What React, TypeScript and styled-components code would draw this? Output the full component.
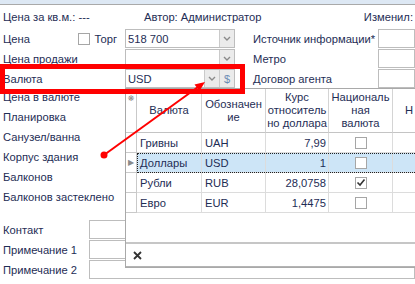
import React from 'react';
import styled, { createGlobalStyle } from 'styled-components';

const GlobalStyle = createGlobalStyle`
  html, body {
    margin: 0;
    padding: 0;
    background: #fff;
  }
  body {
    font-family: "Liberation Sans", Arial, sans-serif;
    font-size: 11.2px;
    color: #1e2d55;
  }
`;

const Window = styled.div`
  position: relative;
  width: 415px;
  height: 284px;
  overflow: hidden;
  background: #fff;
`;

const TopStrip = styled.div`
  height: 4px;
  background: #dde8f4;
  border-bottom: 1px solid #a9a9a9;
`;

const InfoRow = styled.div`
  display: flex;
  align-items: center;
  height: 24px;
  padding: 0 2px 0 3px;
`;

const InfoLeft = styled.span`
  width: 141px;
`;

const InfoRight = styled.span`
  margin-left: auto;
`;

const FieldRow = styled.div`
  display: grid;
  grid-template-columns: 125px 110px 18px 125px 1fr;
  height: 20px;
`;

const Label = styled.div<{ $flush?: boolean }>`
  display: flex;
  align-items: center;
  height: 19px;
  padding-left: ${(p) => (p.$flush ? '0' : '3px')};
  white-space: nowrap;
`;

const TorgGroup = styled.span`
  display: flex;
  align-items: center;
  gap: 5px;
  margin-left: auto;
  margin-right: 8px;
`;

const CheckBox = styled.span`
  display: inline-flex;
  align-items: center;
  justify-content: center;
  width: 12px;
  height: 12px;
  box-sizing: border-box;
  border: 1px solid #a6a6a6;
  background: #fff;
`;

const Input = styled.div`
  display: flex;
  align-items: center;
  height: 19px;
  box-sizing: border-box;
  border: 1px solid #bdbdbd;
  background: #fff;
  padding-left: 2px;
  white-space: nowrap;
  overflow: hidden;
`;

const InputText = styled.span`
  flex: 1;
`;

const DropButton = styled.span<{ $accent?: boolean }>`
  display: flex;
  align-items: center;
  justify-content: center;
  width: 15px;
  height: 100%;
  box-sizing: border-box;
  border-left: 1px solid #cacaca;
  background: #ebebeb;
  color: ${(p) => (p.$accent ? '#6a8ab4' : '#8a8a8a')};
  font-size: 11px;
`;

const Gap = styled.div``;

const LowerLabels = styled.div`
  display: flex;
  flex-direction: column;
  margin-top: -2px;
`;

const LowerLabel = styled.div`
  display: flex;
  align-items: center;
  height: 20px;
  padding-left: 3px;
`;

const BottomFields = styled.div`
  margin-top: 13px;
`;

const BottomRow = styled.div`
  display: grid;
  grid-template-columns: 89px 1fr;
  height: 20px;
`;

const BottomInput = styled.div`
  height: 19px;
  box-sizing: border-box;
  border: 1px solid #bdbdbd;
`;

/* dropdown grid popup */

const Popup = styled.div`
  position: absolute;
  left: 125px;
  top: 88px;
  width: 300px;
  height: 180px;
  box-sizing: border-box;
  display: flex;
  flex-direction: column;
  background: #fff;
  border: 1px solid #a9a9a9;
  border-right: none;
`;

const GridRow = styled.div`
  display: flex;
  flex: none;
`;

const RowBody = styled.div<{ $selected?: boolean }>`
  display: flex;
  flex: none;
  background: ${(p) => (p.$selected ? '#cde5f7' : '#fff')};
  outline: ${(p) => (p.$selected ? '1px dotted #222' : 'none')};
  outline-offset: -1px;
`;

const SelectorCell = styled.div<{ $header?: boolean }>`
  display: flex;
  flex: none;
  align-items: ${(p) => (p.$header ? 'flex-start' : 'center')};
  justify-content: center;
  width: 11px;
  height: ${(p) => (p.$header ? '44px' : '20px')};
  padding-top: ${(p) => (p.$header ? '5px' : '0')};
  box-sizing: border-box;
  border-right: 1px solid #c9c9c9;
  border-bottom: 1px solid #c9c9c9;
  color: #8a8a8a;
  font-family: "DejaVu Sans", sans-serif;
  font-size: 8px;
`;

const HeadCell = styled.div<{ $w: number; $left?: boolean }>`
  display: flex;
  flex: none;
  align-items: center;
  justify-content: ${(p) => (p.$left ? 'flex-start' : 'center')};
  width: ${(p) => p.$w}px;
  height: 44px;
  box-sizing: border-box;
  padding-left: ${(p) => (p.$left ? '12px' : '0')};
  border-right: 1px solid #d4d4d4;
  border-bottom: 1px solid #c4c4c4;
  text-align: center;
  line-height: 13px;
`;

const Cell = styled.div<{ $w: number; $align?: 'left' | 'right' | 'center' }>`
  display: flex;
  flex: none;
  align-items: center;
  justify-content: ${(p) =>
    p.$align === 'right' ? 'flex-end' : p.$align === 'center' ? 'center' : 'flex-start'};
  width: ${(p) => p.$w}px;
  height: 20px;
  box-sizing: border-box;
  padding: 0 2px 0 3px;
  border-right: 1px solid #dcdcdc;
  border-bottom: 1px solid #dcdcdc;
  white-space: nowrap;
`;

const EmptyArea = styled.div`
  flex: 1;
  border-bottom: 2px solid #c6c6c6;
`;

const PopupFooter = styled.div`
  display: flex;
  align-items: center;
  height: 23px;
  box-sizing: border-box;
  padding-left: 7px;
  border-bottom: 1px solid #b4b4b4;
`;

/* annotation */

const Highlight = styled.div`
  position: absolute;
  left: 0;
  top: 64px;
  width: 245px;
  height: 30px;
  box-sizing: border-box;
  border: 5px solid #ff0000;
  pointer-events: none;
`;

const ArrowLayer = styled.svg`
  position: absolute;
  left: 0;
  top: 0;
  pointer-events: none;
`;

const widths = [65, 64, 63, 64, 80];

const rows = [
  { name: 'Гривны', code: 'UAH', rate: '7,99', national: false },
  { name: 'Доллары', code: 'USD', rate: '1', national: false, selected: true },
  { name: 'Рубли', code: 'RUB', rate: '28,0758', national: true },
  { name: 'Евро', code: 'EUR', rate: '1,4475', national: false },
];

const Chevron = () => (
  <svg width="8" height="5" viewBox="0 0 8 5">
    <path d="M1 1 L4 4 L7 1" fill="none" stroke="#8a8a8a" strokeWidth="1.4" />
  </svg>
);

const Check = () => (
  <svg width="10" height="9" viewBox="0 0 10 9">
    <path d="M1.5 4.5 L4 7 L8.5 1.5" fill="none" stroke="#333" strokeWidth="1.6" />
  </svg>
);

const App: React.FC = () => {
  return (
    <Window>
      <GlobalStyle />
      <TopStrip />
      <InfoRow>
        <InfoLeft>Цена за кв.м.: ---</InfoLeft>
        <span>Автор: Администратор</span>
        <InfoRight>Изменил:</InfoRight>
      </InfoRow>

      <FieldRow>
        <Label>
          Цена
          <TorgGroup>
            <CheckBox />
            Торг
          </TorgGroup>
        </Label>
        <Input>
          <InputText>518 700</InputText>
          <DropButton><Chevron /></DropButton>
        </Input>
        <Gap />
        <Label $flush>Источник информации*</Label>
        <Input />
      </FieldRow>
      <FieldRow>
        <Label>Цена продажи</Label>
        <Input>
          <InputText />
          <DropButton><Chevron /></DropButton>
        </Input>
        <Gap />
        <Label $flush>Метро</Label>
        <Input />
      </FieldRow>
      <FieldRow>
        <Label>Валюта</Label>
        <Input>
          <InputText>USD</InputText>
          <DropButton><Chevron /></DropButton>
          <DropButton $accent>$</DropButton>
        </Input>
        <Gap />
        <Label $flush>Договор агента</Label>
        <Input />
      </FieldRow>

      <LowerLabels>
        <LowerLabel>Цена в валюте</LowerLabel>
        <LowerLabel>Планировка</LowerLabel>
        <LowerLabel>Санузел/ванна</LowerLabel>
        <LowerLabel>Корпус здания</LowerLabel>
        <LowerLabel>Балконов</LowerLabel>
        <LowerLabel>Балконов застеклено</LowerLabel>
      </LowerLabels>

      <BottomFields>
        <BottomRow>
          <Label>Контакт</Label>
          <BottomInput />
        </BottomRow>
        <BottomRow>
          <Label>Примечание 1</Label>
          <BottomInput />
        </BottomRow>
        <BottomRow>
          <Label>Примечание 2</Label>
          <BottomInput />
        </BottomRow>
      </BottomFields>

      <Popup>
        <GridRow>
          <SelectorCell $header>❋</SelectorCell>
          <RowBody>
            <HeadCell $w={widths[0]}>Валюта</HeadCell>
            <HeadCell $w={widths[1]}>Обозначен<br />ие</HeadCell>
            <HeadCell $w={widths[2]}>Курс<br />относитель<br />но доллара</HeadCell>
            <HeadCell $w={widths[3]}>Националь<br />ная<br />валюта</HeadCell>
            <HeadCell $w={widths[4]} $left>Н</HeadCell>
          </RowBody>
        </GridRow>
        {rows.map((r) => (
          <GridRow key={r.code}>
            <SelectorCell>{r.selected ? '▶' : ''}</SelectorCell>
            <RowBody $selected={r.selected}>
              <Cell $w={widths[0]}>{r.name}</Cell>
              <Cell $w={widths[1]}>{r.code}</Cell>
              <Cell $w={widths[2]} $align="right">{r.rate}</Cell>
              <Cell $w={widths[3]} $align="center">
                <CheckBox>{r.national && <Check />}</CheckBox>
              </Cell>
              <Cell $w={widths[4]} />
            </RowBody>
          </GridRow>
        ))}
        <EmptyArea />
        <PopupFooter>
          <svg width="9" height="9" viewBox="0 0 9 9">
            <path d="M1 1 L8 8 M8 1 L1 8" stroke="#333" strokeWidth="1.8" />
          </svg>
        </PopupFooter>
      </Popup>

      <Highlight />
      <ArrowLayer width="415" height="284" viewBox="0 0 415 284">
        <line x1="104" y1="155" x2="198" y2="87" stroke="#ff0000" strokeWidth="2" />
        <polygon points="205,82 199.5,91 194.5,84.5" fill="#ff0000" />
        <circle cx="104" cy="155" r="3.5" fill="#ff0000" />
      </ArrowLayer>
    </Window>
  );
};

export default App;
